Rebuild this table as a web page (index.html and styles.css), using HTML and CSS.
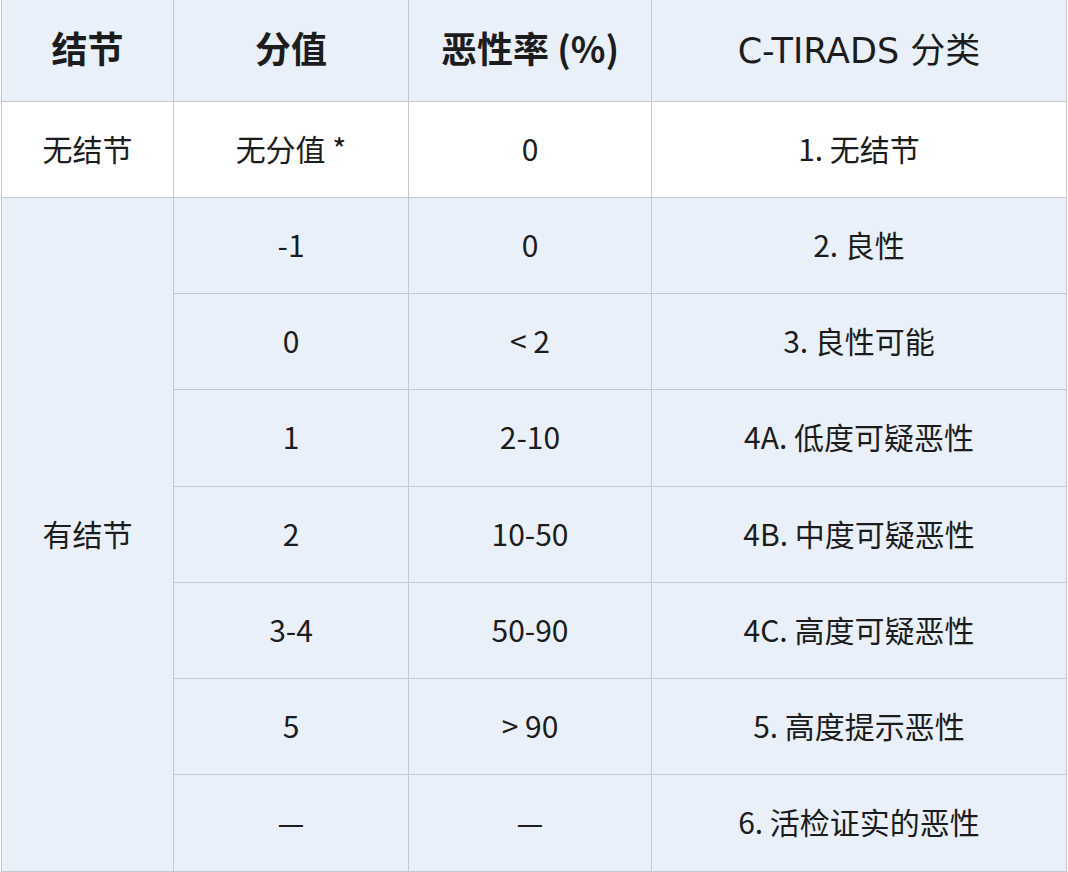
FILE: index.html
```html
<!DOCTYPE html>
<html lang="zh-CN">
<head>
<meta charset="utf-8">
<link rel="stylesheet" href="styles.css">
</head>
<body>
<div class="wrap">
<table class="tirads">
  <colgroup>
    <col class="c1"><col class="c2"><col class="c3"><col class="c4">
  </colgroup>
  <thead>
    <tr class="head">
      <th class="bold">结节</th>
      <th class="bold">分值</th>
      <th class="bold">恶性率 (%)</th>
      <th class="med">C-TIRADS 分类</th>
    </tr>
  </thead>
  <tbody>
    <tr class="white">
      <td>无结节</td><td>无分值 *</td><td>0</td><td>1. 无结节</td>
    </tr>
    <tr>
      <td rowspan="7">有结节</td><td>-1</td><td>0</td><td>2. 良性</td>
    </tr>
    <tr><td>0</td><td>&lt; 2</td><td>3. 良性可能</td></tr>
    <tr><td>1</td><td>2-10</td><td>4A. 低度可疑恶性</td></tr>
    <tr><td>2</td><td>10-50</td><td>4B. 中度可疑恶性</td></tr>
    <tr><td>3-4</td><td>50-90</td><td>4C. 高度可疑恶性</td></tr>
    <tr><td>5</td><td>&gt; 90</td><td>5. 高度提示恶性</td></tr>
    <tr><td>—</td><td>—</td><td>6. 活检证实的恶性</td></tr>
  </tbody>
</table>
</div>
</body>
</html>
```
FILE: styles.css
```css
html, body {
  margin: 0;
  padding: 0;
  background: #ffffff;
}
.wrap {
  padding-left: 1px;
  width: 1066px;
}
.tirads {
  border-collapse: collapse;
  table-layout: fixed;
  width: 1065px;
  font-family: "Noto Sans CJK SC", "Noto Sans", sans-serif;
  color: #1c1c1c;
  background: #e9f0fa;
}
.c1 { width: 172px; }
.c2 { width: 235px; }
.c3 { width: 243px; }
.c4 { width: 415px; }
.tirads th,
.tirads td {
  border: 1px solid #c5c8ce;
  text-align: center;
  vertical-align: middle;
  padding: 0 0 3px 0;
  font-size: 30px;
  font-weight: 400;
  height: 96.25px;
  box-sizing: border-box;
}
.tirads thead th {
  border-top: none;
  height: 101px;
  font-size: 36px;
  padding-bottom: 6px;
}
.tirads .bold { font-weight: 700; }
.tirads .med {
  font-weight: 400;
  font-family: "DejaVu Sans", "Noto Sans CJK SC", sans-serif;
  font-size: 35px;
}
.tirads tr.white td { background: #ffffff; }
```
